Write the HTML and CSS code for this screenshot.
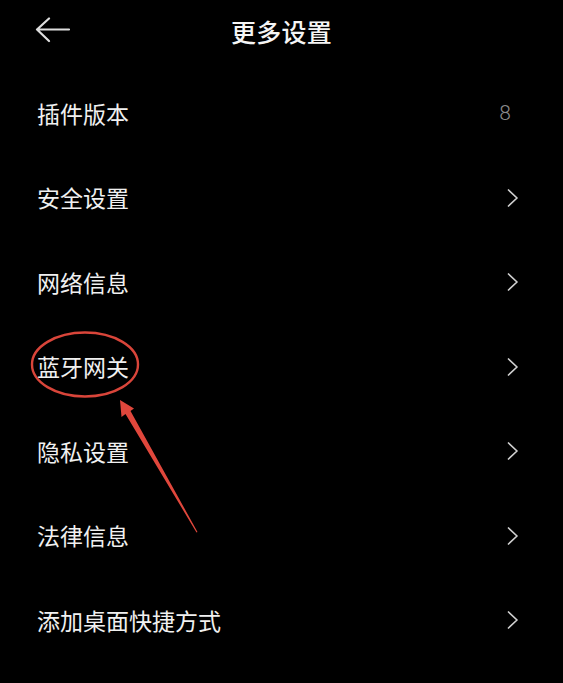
FILE: index.html
```html
<!DOCTYPE html>
<html lang="zh-CN">
<head>
<meta charset="utf-8">
<title>更多设置</title>
<link rel="stylesheet" href="styles.css">
</head>
<body>
<div class="screen">
  <header class="topbar">
    <div class="back">
      <svg class="back-icon" width="36" height="28" viewBox="0 0 36 28">
        <path d="M2 12.5 H34 M14 1.5 L2 12.5 L14 24" fill="none" stroke="#dedede" stroke-width="2.2" stroke-linecap="round" stroke-linejoin="round"/>
      </svg>
    </div>
    <h1 class="title">更多设置</h1>
    <div></div>
  </header>
  <ul class="list">
    <li class="row"><span class="label">插件版本</span><span class="value">8</span></li>
    <li class="row"><span class="label">安全设置</span><svg class="chev" width="12" height="18" viewBox="0 0 12 18"><path d="M1.5 1 L10 9 L1.5 17" fill="none" stroke="#cfcfcf" stroke-width="1.7" stroke-linecap="round" stroke-linejoin="round"/></svg></li>
    <li class="row"><span class="label">网络信息</span><svg class="chev" width="12" height="18" viewBox="0 0 12 18"><path d="M1.5 1 L10 9 L1.5 17" fill="none" stroke="#cfcfcf" stroke-width="1.7" stroke-linecap="round" stroke-linejoin="round"/></svg></li>
    <li class="row"><span class="label">蓝牙网关</span><svg class="chev" width="12" height="18" viewBox="0 0 12 18"><path d="M1.5 1 L10 9 L1.5 17" fill="none" stroke="#cfcfcf" stroke-width="1.7" stroke-linecap="round" stroke-linejoin="round"/></svg></li>
    <li class="row"><span class="label">隐私设置</span><svg class="chev" width="12" height="18" viewBox="0 0 12 18"><path d="M1.5 1 L10 9 L1.5 17" fill="none" stroke="#cfcfcf" stroke-width="1.7" stroke-linecap="round" stroke-linejoin="round"/></svg></li>
    <li class="row"><span class="label">法律信息</span><svg class="chev" width="12" height="18" viewBox="0 0 12 18"><path d="M1.5 1 L10 9 L1.5 17" fill="none" stroke="#cfcfcf" stroke-width="1.7" stroke-linecap="round" stroke-linejoin="round"/></svg></li>
    <li class="row"><span class="label">添加桌面快捷方式</span><svg class="chev" width="12" height="18" viewBox="0 0 12 18"><path d="M1.5 1 L10 9 L1.5 17" fill="none" stroke="#cfcfcf" stroke-width="1.7" stroke-linecap="round" stroke-linejoin="round"/></svg></li>
  </ul>
  <svg class="annotation" width="563" height="683" viewBox="0 0 563 683">
    <ellipse cx="85" cy="364.5" rx="53" ry="32" fill="none" stroke="#d9453a" stroke-width="2.4"/>
    <polygon points="120,400 134,408.5 130.5,411 197.5,532 196.5,532.5 125.5,414 121.5,417" fill="#e0473c"/>
  </svg>
</div>
</body>
</html>
```

FILE: styles.css
```css
html, body {
  margin: 0;
  padding: 0;
  background: #000;
}

body {
  font-family: "Noto Sans CJK SC", "Noto Sans", sans-serif;
  color: #f2f2f2;
}

.screen {
  position: relative;
  width: 563px;
  height: 683px;
  overflow: hidden;
  background: #000;
}

.topbar {
  height: 62px;
  display: grid;
  grid-template-columns: 1fr auto 1fr;
  align-items: center;
}

.back {
  padding-left: 35px;
  display: flex;
  align-items: center;
}

.back-icon {
  display: block;
  margin-top: 0;
}

.title {
  margin: 0;
  font-size: 25px;
  font-weight: 500;
  line-height: 1;
  color: #f5f5f5;
  letter-spacing: 0.3px;
}

.list {
  list-style: none;
  margin: 0;
  padding: 9px 0 0;
}

.row {
  height: 84.5px;
  display: flex;
  align-items: center;
  justify-content: space-between;
  padding: 0 44px 0 37px;
}

.label {
  font-size: 23px;
  line-height: 1;
  font-weight: 400;
  color: #f0f0f0;
}

.value {
  font-family: "Roboto", "Noto Sans", sans-serif;
  font-weight: 300;
  font-size: 21px;
  line-height: 1;
  color: #8a8a8a;
  margin-right: 8px;
}

.chev {
  display: block;
}

.annotation {
  position: absolute;
  left: 0;
  top: 0;
  pointer-events: none;
}
```
